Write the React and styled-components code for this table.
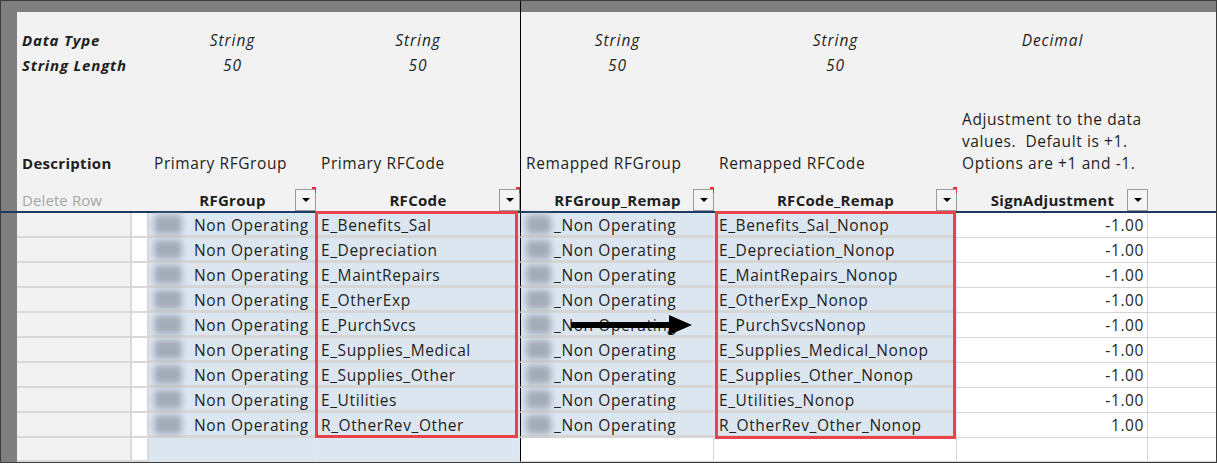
import React from 'react';
import styled, {createGlobalStyle} from 'styled-components';

const GlobalStyle = createGlobalStyle`
  html, body {
    margin: 0;
    padding: 0;
    background: #ffffff;
  }
  body {
    font-family: 'Open Sans', 'Noto Sans', sans-serif;
  }
`;

const Sheet = styled.div`
  width: 1217px;
  height: 463px;
  box-sizing: border-box;
  border: 1px solid #3c3c3c;
  display: grid;
  grid-template-columns: 16px 115px 17px 167px 204px 194px 243px 191px 1fr;
  grid-template-rows: 11px 15px 25px 25px 99px 35px 2px repeat(9, 25px) 24px;
  overflow: hidden;
  font-family: 'Open Sans', 'Noto Sans', sans-serif;
  font-size: 15.5px;
  letter-spacing: 0.6px;
  color: #1e1e1e;

  & > * {
    box-sizing: border-box;
    min-width: 0;
  }
`;

const TopBar = styled.div`
  grid-row: 1;
  grid-column: ${props => props.$frozen ? '6 / -1' : '1 / 6'};
  background: #7f7f7f;
  border-left: ${props => props.$frozen ? '1px solid #000' : '0'};
`;

const Strip = styled.div`
  grid-column: 1;
  grid-row: ${props => props.$lower ? '8 / -1' : '2 / 7'};
  background: #7f7f7f;
`;

const HeaderRule = styled.div`
  grid-row: 7;
  grid-column: 1 / -1;
  background: #1f3a60;
`;

const HeadCell = styled.div`
  position: relative;
  background: #f2f2f2;
  display: flex;
  align-items: ${props => props.$bottom !== undefined ? 'flex-end' : 'center'};
  justify-content: ${props => props.$center ? 'center' : 'flex-start'};
  padding: 0 5px ${props => props.$bottom || 0}px;
  border-left: ${props => props.$freeze ? '1px solid #000' : '0'};
  white-space: nowrap;
  line-height: 22px;
`;

const MetaLabel = styled.span`
  font-weight: 700;
  font-style: italic;
  font-size: 15px;
  letter-spacing: 0.8px;
`;

const MetaValue = styled.span`
  font-style: italic;
  font-size: 15.5px;
  letter-spacing: 0.9px;
`;

const DescTitle = styled.span`
  font-weight: 700;
  font-size: 15px;
  letter-spacing: 0.3px;
`;

const DescNote = styled.div`
  white-space: normal;
  width: 186px;
  line-height: 22px;
`;

const ColumnName = styled.span`
  font-weight: 700;
  font-size: 15px;
  letter-spacing: 0.3px;
  line-height: 22px;
`;

const DeleteLabel = styled.span`
  color: #a6a6a6;
  font-size: 15px;
  letter-spacing: 0.1px;
`;

const FilterButton = styled.div`
  position: absolute;
  right: 0;
  bottom: 0;
  width: 21px;
  height: 22px;
  box-sizing: border-box;
  border: 1px solid #9b9b9b;
  background: #f4f4f4;
  display: flex;
  align-items: center;
  justify-content: center;

  &::before {
    content: '';
    border-left: 4px solid transparent;
    border-right: 4px solid transparent;
    border-top: 4px solid #000;
  }

  &::after {
    content: '';
    display: ${props => props.$note ? 'block' : 'none'};
    position: absolute;
    top: -3px;
    right: -2px;
    width: 3px;
    height: 4px;
    border-top: 2px solid #ee2a2a;
    border-right: 2px solid #ee2a2a;
  }
`;

const RowHeadCell = styled.div`
  background: #f2f2f2;
  border-right: 2px solid #d9d9d9;
  border-bottom: 2px solid #d9d9d9;
`;

const GapCell = styled.div`
  background: #ffffff;
  border-right: 2px solid #d9d9d9;
  border-bottom: 2px solid #d9d9d9;
`;

const FillCell = styled.div`
  position: relative;
  display: flex;
  align-items: center;
  padding-left: ${props => props.$pad || 5}px;
  padding-top: 1px;
  background: #dce6f1;
  border-bottom: ${props => props.$last ? '0' : '3px solid #d6d6d6'};
  border-right: 1px solid #e4e8ee;
  border-left: ${props => props.$freeze ? '1px solid #000' : '0'};
  white-space: nowrap;
`;

const PlainCell = styled.div`
  position: relative;
  display: flex;
  align-items: center;
  justify-content: flex-end;
  padding-right: 3px;
  background: #ffffff;
  border-bottom: 1px solid #d4d4d4;
  border-right: ${props => props.$edge ? '1px solid #d4d4d4' : '0'};
  border-left: ${props => props.$freeze ? '1px solid #000' : '0'};
`;

const Blur = styled.span`
  display: inline-block;
  flex: none;
  width: ${props => props.$w || 24}px;
  height: 19px;
  margin-right: ${props => props.$gap || 0}px;
  background: #a3abb8;
  border-radius: 4px;
  filter: blur(3px);
`;

const RedFrame = styled.div`
  position: absolute;
  top: -2px;
  left: ${props => props.$left}px;
  right: ${props => props.$right}px;
  height: ${props => props.$h}px;
  border: 3px solid #e8434a;
  box-sizing: border-box;
  z-index: 3;
  pointer-events: none;
`;

const Arrow = styled.svg`
  position: absolute;
  left: 50px;
  top: 2px;
  z-index: 4;
`;

const metaRows = [
  ['Data Type', 'String', 'String', 'String', 'String', 'Decimal'],
  ['String Length', '50', '50', '50', '50', ''],
];

const columns = [
  {desc: 'Primary RFGroup', name: 'RFGroup', note: true},
  {desc: 'Primary RFCode', name: 'RFCode', note: true},
  {desc: 'Remapped RFGroup', name: 'RFGroup_Remap', note: true, freeze: true},
  {desc: 'Remapped RFCode', name: 'RFCode_Remap', note: true},
];

const rows = [
  ['E_Benefits_Sal', 'E_Benefits_Sal_Nonop', '-1.00'],
  ['E_Depreciation', 'E_Depreciation_Nonop', '-1.00'],
  ['E_MaintRepairs', 'E_MaintRepairs_Nonop', '-1.00'],
  ['E_OtherExp', 'E_OtherExp_Nonop', '-1.00'],
  ['E_PurchSvcs', 'E_PurchSvcsNonop', '-1.00'],
  ['E_Supplies_Medical', 'E_Supplies_Medical_Nonop', '-1.00'],
  ['E_Supplies_Other', 'E_Supplies_Other_Nonop', '-1.00'],
  ['E_Utilities', 'E_Utilities_Nonop', '-1.00'],
  ['R_OtherRev_Other', 'R_OtherRev_Other_Nonop', '1.00'],
];

const MetaRow = ({cells}) => {
  const [label, ...values] = cells;
  return (
    <>
      <HeadCell><MetaLabel>{label}</MetaLabel></HeadCell>
      <HeadCell />
      {values.map((v, i) => (
        <HeadCell key={i} $center $freeze={i === 2}>
          <MetaValue>{v}</MetaValue>
        </HeadCell>
      ))}
      <HeadCell />
    </>
  );
};

const DataRow = ({code, remap, value, index}) => (
  <>
    <RowHeadCell />
    <GapCell />
    <FillCell $pad={5}>
      <Blur $w={28} $gap={12} />
      Non Operating
    </FillCell>
    <FillCell>
      {index === 0 && <RedFrame $left={-1} $right={1} $h={227} />}
      {code}
    </FillCell>
    <FillCell $freeze $pad={5}>
      <Blur $w={25} $gap={3} />
      _Non Operating
      {index === 4 && (
        <Arrow width="121" height="20" viewBox="0 0 121 20">
          <rect x="0" y="7" width="101" height="6" fill="#000" />
          <polygon points="98,0 121,10 98,20" fill="#000" />
        </Arrow>
      )}
    </FillCell>
    <FillCell>
      {index === 0 && <RedFrame $left={1} $right={0} $h={228} />}
      {remap}
    </FillCell>
    <PlainCell $edge>{value}</PlainCell>
    <PlainCell />
  </>
);

const App = () => (
  <>
    <GlobalStyle />
    <Sheet>
      <TopBar />
      <TopBar $frozen />
      <Strip />
      <HeaderRule />
      <Strip $lower />

      {/* blank spacer row under the column letters */}
      <HeadCell /><HeadCell /><HeadCell /><HeadCell />
      <HeadCell $freeze /><HeadCell /><HeadCell /><HeadCell />

      {metaRows.map((cells, i) => <MetaRow key={i} cells={cells} />)}

      <HeadCell $bottom={2}><DescTitle>Description</DescTitle></HeadCell>
      <HeadCell />
      {columns.map(c => (
        <HeadCell key={c.desc} $bottom={2} $freeze={c.freeze}>{c.desc}</HeadCell>
      ))}
      <HeadCell $bottom={2}>
        <DescNote>Adjustment to the data values.&nbsp; Default is +1. Options are +1 and -1.</DescNote>
      </HeadCell>
      <HeadCell />

      <HeadCell $bottom={0}><DeleteLabel>Delete Row</DeleteLabel></HeadCell>
      <HeadCell />
      {columns.map(c => (
        <HeadCell key={c.name} $bottom={0} $center $freeze={c.freeze}>
          <ColumnName>{c.name}</ColumnName>
          <FilterButton $note={c.note} />
        </HeadCell>
      ))}
      <HeadCell $bottom={0} $center>
        <ColumnName>SignAdjustment</ColumnName>
        <FilterButton />
      </HeadCell>
      <HeadCell />

      {rows.map(([code, remap, value], i) => (
        <DataRow key={code} index={i} code={code} remap={remap} value={value} />
      ))}

      <RowHeadCell />
      <GapCell />
      <FillCell $last />
      <FillCell $last />
      <PlainCell $freeze $edge />
      <PlainCell $edge />
      <PlainCell $edge />
      <PlainCell />
    </Sheet>
  </>
);

export default App;
